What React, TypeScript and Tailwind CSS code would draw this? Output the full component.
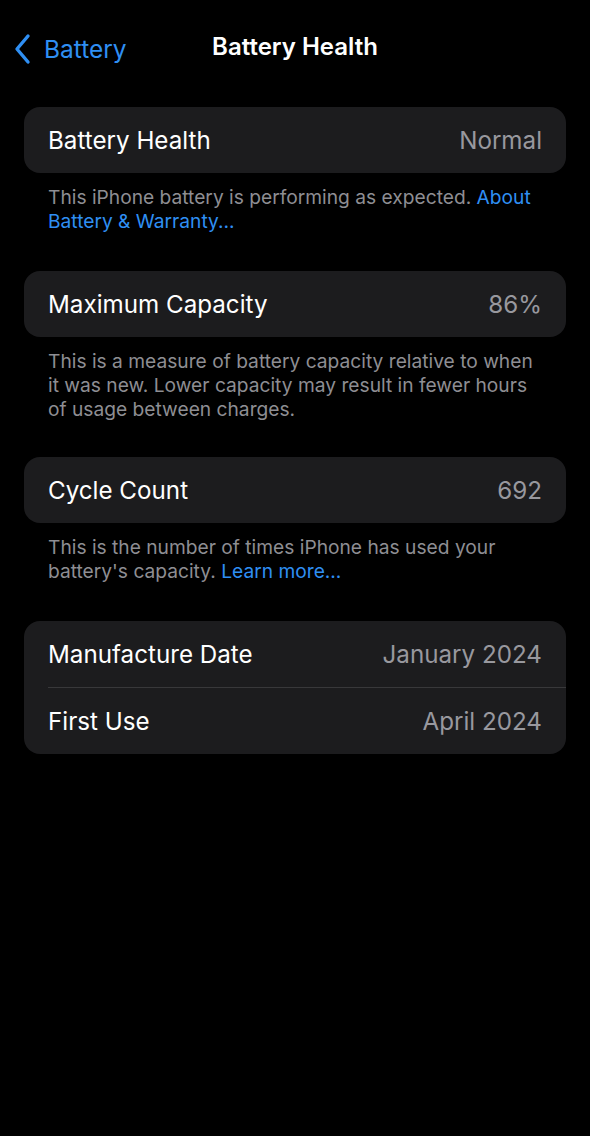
import React from "react";

type Row = { label: string; value: string };

function Card({ rows }: { rows: Row[] }) {
  return (
    <div className="mx-6 overflow-hidden rounded-[16px] bg-[#1c1c1e]">
      {rows.map((r, i) => (
        <div key={r.label} className="pl-6">
          {i > 0 && <div className="h-px bg-[#38383a]" />}
          <div className="flex h-[66px] items-center justify-between pr-6 pt-[3px]">
            <span className="text-[24.2px] text-white">{r.label}</span>
            <span className="text-[24.2px] text-[#98989e]">{r.value}</span>
          </div>
        </div>
      ))}
    </div>
  );
}

function Footer({ children }: { children: React.ReactNode }) {
  return (
    <p className="mx-6 mt-[12px] px-6 text-[19.2px] leading-[24px] text-[#8e8e93]">
      {children}
    </p>
  );
}

export default function App() {
  return (
    <div
      className="min-h-[1136px] bg-black"
      style={{ fontFamily: "Inter, 'Noto Sans', sans-serif" }}
    >
      <div className="relative flex h-[95px] items-center justify-center pb-[2px]">
        <div className="absolute left-[12px] top-[31px] flex items-center gap-[10px] text-[#2f8ff3]">
          <svg width="22" height="32" viewBox="0 0 22 32" fill="none">
            <path
              d="M16 3 L5 16 L16 29"
              stroke="currentColor"
              strokeWidth="3.4"
              strokeLinecap="round"
              strokeLinejoin="round"
            />
          </svg>
          <span className="text-[24.5px]">Battery</span>
        </div>
        <h1 className="text-[24px] font-semibold text-white">Battery Health</h1>
      </div>

      <div className="pt-[12px]">
        <Card rows={[{ label: "Battery Health", value: "Normal" }]} />
        <Footer>
          This iPhone battery is performing as expected.{" "}
          <span className="text-[#2f8ff3]">About Battery &amp; Warranty...</span>
        </Footer>

        <div className="mt-[38px]">
          <Card rows={[{ label: "Maximum Capacity", value: "86%" }]} />
        </div>
        <Footer>
          This is a measure of battery capacity relative to when it was new.
          Lower capacity may result in fewer hours of usage between charges.
        </Footer>

        <div className="mt-[36px]">
          <Card rows={[{ label: "Cycle Count", value: "692" }]} />
        </div>
        <Footer>
          This is the number of times iPhone has used your battery's capacity.{" "}
          <span className="text-[#2f8ff3]">Learn more...</span>
        </Footer>

        <div className="mt-[38px]">
          <Card
            rows={[
              { label: "Manufacture Date", value: "January 2024" },
              { label: "First Use", value: "April 2024" },
            ]}
          />
        </div>
      </div>
    </div>
  );
}
